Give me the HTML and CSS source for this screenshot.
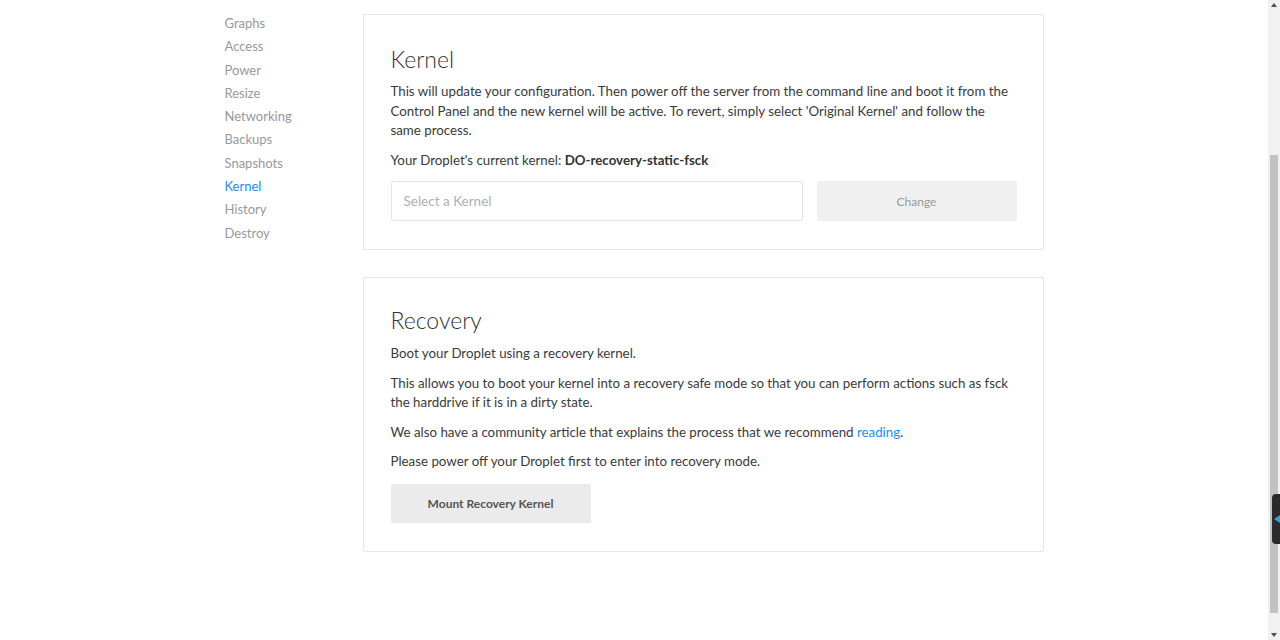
FILE: index.html
```html
<!DOCTYPE html>
<html lang="en">
<head>
<meta charset="utf-8">
<title>Droplet Kernel</title>
<link rel="stylesheet" href="styles.css">
</head>
<body>
<div class="page">
  <div class="content">
    <div class="layout">
      <nav class="sidenav">
        <a class="nav-item">Graphs</a>
        <a class="nav-item">Access</a>
        <a class="nav-item">Power</a>
        <a class="nav-item">Resize</a>
        <a class="nav-item">Networking</a>
        <a class="nav-item">Backups</a>
        <a class="nav-item">Snapshots</a>
        <a class="nav-item active">Kernel</a>
        <a class="nav-item">History</a>
        <a class="nav-item">Destroy</a>
      </nav>
      <main class="panels">
        <section class="card">
          <h2 class="card-title">Kernel</h2>
          <p class="text">This will update your configuration. Then power off the server from the command line and boot it from the Control Panel and the new kernel will be active. To revert, simply select 'Original Kernel' and follow the same process.</p>
          <p class="text">Your Droplet's current kernel: <strong>DO-recovery-static-fsck</strong></p>
          <div class="kernel-row">
            <div class="select">Select a Kernel</div>
            <button class="btn btn-disabled">Change</button>
          </div>
        </section>
        <section class="card">
          <h2 class="card-title">Recovery</h2>
          <p class="text">Boot your Droplet using a recovery kernel.</p>
          <p class="text">This allows you to boot your kernel into a recovery safe mode so that you can perform actions such as fsck the harddrive if it is in a dirty state.</p>
          <p class="text">We also have a community article that explains the process that we recommend <a class="link">reading</a>.</p>
          <p class="text">Please power off your Droplet first to enter into recovery mode.</p>
          <button class="btn btn-mount">Mount Recovery Kernel</button>
        </section>
      </main>
    </div>
  </div>
  <div class="scrollbar">
    <div class="arrow arrow-up"></div>
    <div class="track"><div class="thumb"></div></div>
    <div class="arrow arrow-down"></div>
  </div>
  <div class="side-tab"><span class="tab-arrow"></span></div>
</div>
</body>
</html>
```

FILE: styles.css
```css
* { box-sizing: border-box; }
html, body { margin: 0; padding: 0; height: 100%; overflow: hidden; }
body {
  font-family: Lato, "Open Sans", "Liberation Sans", sans-serif;
  color: #333;
  background: #fff;
}
.page {
  position: relative;
  display: flex;
  width: 1280px;
  height: 640px;
}
.content {
  flex: 1;
  padding-top: 12px;
}
.layout {
  width: 819px;
  margin: 0 auto;
  display: flex;
}
.sidenav {
  width: 138px;
  flex: none;
  display: flex;
  flex-direction: column;
}
.nav-item {
  font-size: 13px;
  line-height: 23.3px;
  color: #999;
  text-decoration: none;
}
.nav-item.active { color: #1f8ceb; }
.panels {
  flex: 1;
  min-width: 0;
  display: flex;
  flex-direction: column;
  gap: 27px;
  padding-top: 2px;
}
.card {
  border: 1px solid #e6e6e6;
  border-radius: 2px;
  padding: 27px 26px 28px 27px;
}
.card-title {
  margin: 2px 0 8px;
  font-size: 23px;
  font-weight: 300;
  line-height: 30px;
  color: #333;
}
.card + .card .card-title {
  margin-top: 0;
  margin-bottom: 9px;
}
.text {
  margin: 0 0 10px;
  max-width: 621px;
  font-size: 13.3px;
  line-height: 19.5px;
  color: #3a3a3a;
}
.text strong { font-weight: 700; color: #333; }
.link { color: #1f8ceb; text-decoration: none; }
.kernel-row {
  display: flex;
  gap: 14px;
  margin-top: 11px;
}
.select {
  flex: 1;
  height: 40px;
  border: 1px solid #e3e3e3;
  border-radius: 3px;
  padding: 0 12px;
  display: flex;
  align-items: center;
  font-size: 13.5px;
  color: #b0b0b0;
}
.btn {
  border: none;
  border-radius: 2px;
  font-family: inherit;
  font-size: 12px;
  height: 40px;
  padding: 0;
}
.btn-disabled {
  flex: none;
  width: 200px;
  background: #f0f0f0;
  color: #999;
}
.btn-mount {
  margin-top: 2px;
  width: 200px;
  height: 39px;
  background: #ebebeb;
  color: #555;
  font-weight: 700;
}
.scrollbar {
  width: 12px;
  flex: none;
  background: #f1f1f1;
  display: flex;
  flex-direction: column;
}
.arrow {
  height: 15px;
  position: relative;
  flex: none;
}
.arrow::after {
  content: "";
  position: absolute;
  left: 3px;
  border-left: 3px solid transparent;
  border-right: 3px solid transparent;
}
.arrow-up::after { top: 3px; border-bottom: 4px solid #505050; }
.arrow-down::after { bottom: 3px; border-top: 4px solid #505050; }
.track {
  flex: 1;
  padding: 0 2px;
  display: flex;
  flex-direction: column;
  justify-content: flex-end;
  padding-bottom: 12px;
}
.thumb {
  height: 458px;
  background: #c1c1c1;
}
.side-tab {
  position: absolute;
  right: 0;
  top: 494px;
  width: 8px;
  height: 50px;
  background: #2b2b2b;
  border-radius: 4px 0 0 4px;
}
.tab-arrow {
  position: absolute;
  top: 21px;
  left: 2px;
  border-top: 4px solid transparent;
  border-bottom: 4px solid transparent;
  border-right: 6px solid #29a3e0;
}
```
